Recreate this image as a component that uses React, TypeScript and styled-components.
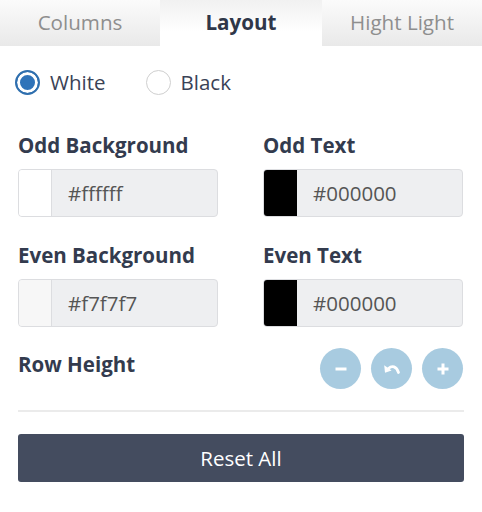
import React, { useState } from 'react';
import styled, { createGlobalStyle } from 'styled-components';

const GlobalStyle = createGlobalStyle`
  html, body {
    margin: 0;
    padding: 0;
    background: #ffffff;
  }
  body {
    font-family: 'Open Sans', 'Noto Sans', 'Liberation Sans', sans-serif;
    color: #333a4d;
  }
  * { box-sizing: border-box; }
`;

type Option = 'white' | 'black';

const rows = [
  [
    { label: 'Odd Background', color: '#ffffff' },
    { label: 'Odd Text', color: '#000000' },
  ],
  [
    { label: 'Even Background', color: '#f7f7f7' },
    { label: 'Even Text', color: '#000000' },
  ],
];

function App() {
  const [tab, setTab] = useState('Layout');
  const [theme, setTheme] = useState<Option>('white');

  return (
    <Panel>
      <GlobalStyle />
      <Tabs>
        {['Columns', 'Layout', 'Hight Light'].map((name) => (
          <Tab key={name} $active={tab === name} onClick={() => setTab(name)}>
            {name}
          </Tab>
        ))}
      </Tabs>

      <Body>
        <RadioRow>
          <RadioLabel onClick={() => setTheme('white')}>
            <RadioDot $checked={theme === 'white'} />
            White
          </RadioLabel>
          <RadioLabel onClick={() => setTheme('black')}>
            <RadioDot $checked={theme === 'black'} />
            Black
          </RadioLabel>
        </RadioRow>

        <Fields>
          {rows.map((row, i) => (
            <FieldGrid key={i}>
              {row.map((f) => (
                <Field key={f.label}>
                  <FieldLabel>{f.label}</FieldLabel>
                  <ColorInput>
                    <Swatch style={{ background: f.color }} $dark={f.color === '#000000'} />
                    <HexValue>{f.color}</HexValue>
                  </ColorInput>
                </Field>
              ))}
            </FieldGrid>
          ))}
        </Fields>

        <HeightRow>
          <FieldLabel>Row Height</FieldLabel>
          <CircleGroup>
            <CircleButton aria-label="decrease">
              <svg width="14" height="14" viewBox="0 0 14 14">
                <path d="M1.5 7h11" stroke="#fff" strokeWidth="3" />
              </svg>
            </CircleButton>
            <CircleButton aria-label="reset">
              <svg width="18" height="12" viewBox="0 0 18 12">
                <path d="M5.5 5.5C9 2.2 13.5 3.2 15.5 9.5" stroke="#fff" strokeWidth="2.8" fill="none" strokeLinecap="round" />
                <path d="M1.2 2.2L2 9.8L8.6 7.6Z" fill="#fff" />
              </svg>
            </CircleButton>
            <CircleButton aria-label="increase">
              <svg width="14" height="14" viewBox="0 0 14 14">
                <path d="M1.5 7h11M7 1.5v11" stroke="#fff" strokeWidth="3" />
              </svg>
            </CircleButton>
          </CircleGroup>
        </HeightRow>

        <Divider />

        <ResetButton>Reset All</ResetButton>
      </Body>
    </Panel>
  );
}

export default App;

const Panel = styled.div`
  width: 482px;
  background: #fff;
`;

const Tabs = styled.div`
  display: grid;
  grid-template-columns: 160px 162px 160px;
  height: 46px;
`;

const Tab = styled.div<{ $active: boolean }>`
  display: flex;
  align-items: center;
  justify-content: center;
  padding-bottom: 3px;
  font-size: 20.6px;
  cursor: pointer;
  color: ${(p) => (p.$active ? '#2f3749' : '#8e8e8e')};
  font-weight: ${(p) => (p.$active ? 700 : 400)};
  background: ${(p) =>
    p.$active
      ? 'linear-gradient(#f1f1f1, #ffffff 70%)'
      : 'linear-gradient(#fbfbfb, #e9e9e9)'};
`;

const Body = styled.div`
  padding: 0 18px;
`;

const RadioRow = styled.div`
  display: flex;
  gap: 40px;
  height: 72px;
  align-items: center;
  margin: 0 0 14px -3px;
`;

const RadioLabel = styled.label`
  display: flex;
  align-items: center;
  gap: 10px;
  font-size: 20.5px;
  color: #3a4256;
  cursor: pointer;
`;

const RadioDot = styled.span<{ $checked: boolean }>`
  width: 25px;
  height: 25px;
  border-radius: 50%;
  border: ${(p) => (p.$checked ? '2px solid #2f6fae' : '1px solid #cfcfcf')};
  background: ${(p) => (p.$checked ? '#2f73b9' : '#fff')};
  box-shadow: ${(p) => (p.$checked ? 'inset 0 0 0 3px #fff' : 'none')};
`;

const Fields = styled.div`
  display: flex;
  flex-direction: column;
  gap: 25px;
  margin-bottom: 24px;
`;

const FieldGrid = styled.div`
  display: grid;
  grid-template-columns: 200px 200px;
  column-gap: 45px;
`;

const Field = styled.div`
  display: flex;
  flex-direction: column;
`;

const FieldLabel = styled.div`
  font-size: 20.5px;
  font-weight: 700;
  color: #333b4e;
  line-height: 26px;
  margin-bottom: 11px;
`;

const ColorInput = styled.div`
  display: flex;
  height: 48px;
  border: 1px solid #dcdde0;
  border-radius: 4px;
  background: #eeeff1;
  overflow: hidden;
`;

const Swatch = styled.div<{ $dark: boolean }>`
  width: 33px;
  border-right: 1px solid ${(p) => (p.$dark ? '#000' : '#dcdde0')};
`;

const HexValue = styled.div`
  display: flex;
  align-items: center;
  padding-left: 16px;
  font-size: 20.5px;
  color: #555;
`;

const HeightRow = styled.div`
  display: flex;
  justify-content: space-between;
  align-items: flex-start;
`;

const CircleGroup = styled.div`
  display: flex;
  gap: 10px;
  margin: -3px 1px 0 0;
`;

const CircleButton = styled.button`
  width: 41px;
  height: 41px;
  border-radius: 50%;
  border: none;
  background: #a8cbe0;
  display: flex;
  align-items: center;
  justify-content: center;
  padding: 0;
  cursor: pointer;
`;

const Divider = styled.hr`
  border: none;
  border-top: 2px solid #ebebeb;
  margin: 21px 0 22px 0;
`;

const ResetButton = styled.button`
  width: 100%;
  height: 48px;
  border: none;
  border-radius: 3px;
  background: #444c5f;
  color: #fff;
  font-family: inherit;
  font-size: 20.5px;
  cursor: pointer;
`;
